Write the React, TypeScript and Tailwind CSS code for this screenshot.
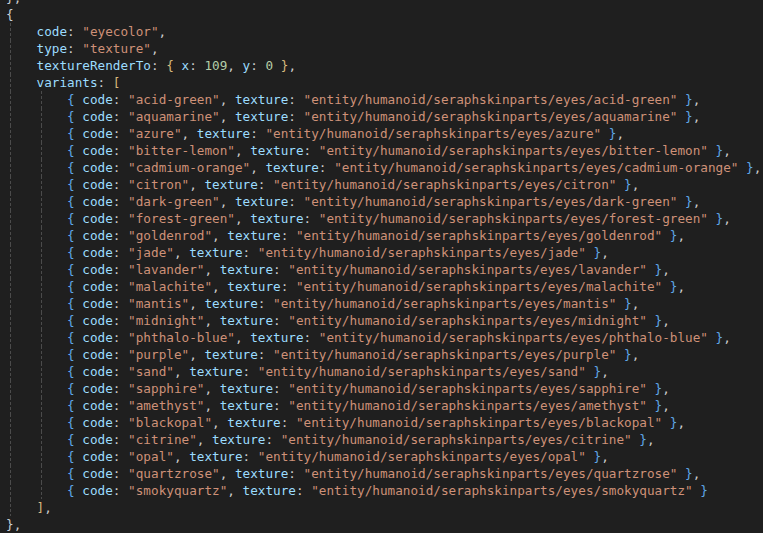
import React from "react";

const KEY = "text-[#9cdcfe]";
const PUN = "text-[#cccccc]";
const STR = "text-[#ce9178]";
const NUM = "text-[#b5cea8]";
const B1 = "text-[#c9d1d9]";
const B2 = "text-[#d7ba7d]";
const B3 = "text-[#5fa8e8]";

type Tok = [string, string];

const variants = [
  "acid-green",
  "aquamarine",
  "azure",
  "bitter-lemon",
  "cadmium-orange",
  "citron",
  "dark-green",
  "forest-green",
  "goldenrod",
  "jade",
  "lavander",
  "malachite",
  "mantis",
  "midnight",
  "phthalo-blue",
  "purple",
  "sand",
  "sapphire",
  "amethyst",
  "blackopal",
  "citrine",
  "opal",
  "quartzrose",
  "smokyquartz",
];

type Line = { indent: number; toks: Tok[] };

const lines: Line[] = [
  { indent: 0, toks: [[B1, "}"], [PUN, ","]] },
  { indent: 0, toks: [[B1, "{"]] },
  {
    indent: 1,
    toks: [
      [KEY, "code"],
      [PUN, ": "],
      [STR, '"eyecolor"'],
      [PUN, ","],
    ],
  },
  {
    indent: 1,
    toks: [
      [KEY, "type"],
      [PUN, ": "],
      [STR, '"texture"'],
      [PUN, ","],
    ],
  },
  {
    indent: 1,
    toks: [
      [KEY, "textureRenderTo"],
      [PUN, ": "],
      [B2, "{"],
      [PUN, " "],
      [KEY, "x"],
      [PUN, ": "],
      [NUM, "109"],
      [PUN, ", "],
      [KEY, "y"],
      [PUN, ": "],
      [NUM, "0"],
      [PUN, " "],
      [B2, "}"],
      [PUN, ","],
    ],
  },
  {
    indent: 1,
    toks: [
      [KEY, "variants"],
      [PUN, ": "],
      [B2, "["],
    ],
  },
  ...variants.map((v, i) => ({
    indent: 2,
    toks: [
      [B3, "{"],
      [PUN, " "],
      [KEY, "code"],
      [PUN, ": "],
      [STR, `"${v}"`],
      [PUN, ", "],
      [KEY, "texture"],
      [PUN, ": "],
      [STR, `"entity/humanoid/seraphskinparts/eyes/${v}"`],
      [PUN, " "],
      [B3, "}"],
      [PUN, i === variants.length - 1 ? "" : ","],
    ] as Tok[],
  })),
  { indent: 1, toks: [[B2, "]"], [PUN, ","]] },
  { indent: 0, toks: [[B1, "}"], [PUN, ","]] },
];

function Guide() {
  return (
    <span className="relative h-full w-[30.53px] shrink-0">
      <span className="absolute left-[4px] top-0 h-full w-px bg-[linear-gradient(to_bottom,#4b4b4b_0_3px,transparent_3px_5px)] bg-[length:1px_5px]" />
    </span>
  );
}

export default function App() {
  return (
    <div className="relative h-[533px] w-[763px] overflow-hidden bg-[#1f1f1f]">
      <div
        className="-mt-[11px] flex flex-col pl-[6px] text-[12.68px] leading-[17px] whitespace-pre"
        style={{ fontFamily: '"DejaVu Sans Mono", "Liberation Mono", monospace' }}
      >
        {lines.map((ln, i) => (
          <div key={i} className="flex h-[17px] items-center">
            {Array.from({ length: ln.indent }).map((_, j) => (
              <Guide key={j} />
            ))}
            <span>
              {ln.toks.map(([c, t], k) => (
                <span key={k} className={c}>
                  {t}
                </span>
              ))}
            </span>
          </div>
        ))}
      </div>
    </div>
  );
}
